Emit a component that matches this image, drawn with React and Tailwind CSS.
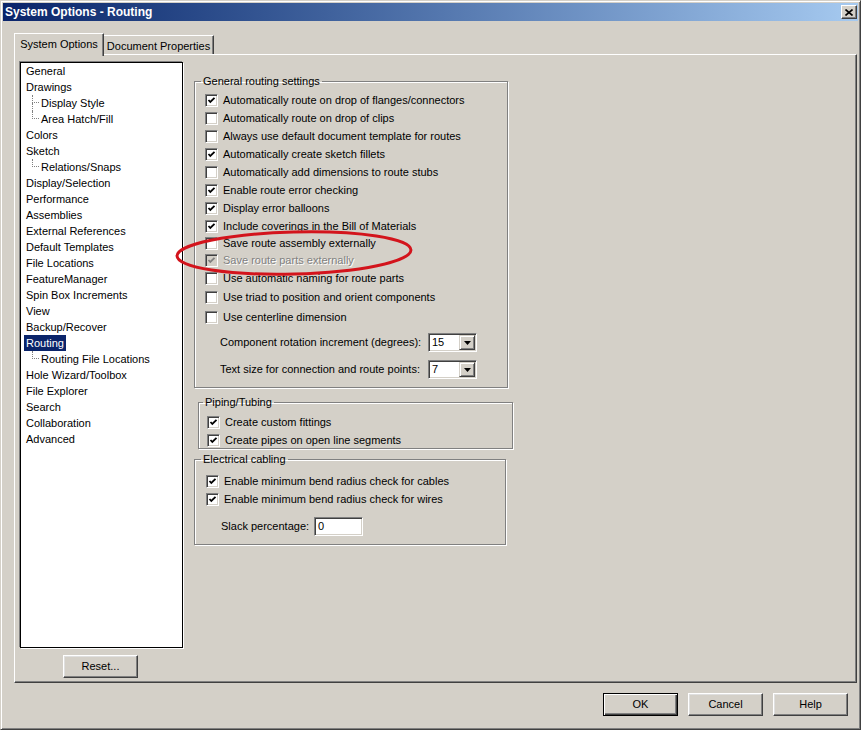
import React from 'react';

const FONT = { fontFamily: '"Liberation Sans", Arial, sans-serif' };

const tree = [
  { label: 'General' },
  { label: 'Drawings' },
  { label: 'Display Style', child: true },
  { label: 'Area Hatch/Fill', child: true, last: true },
  { label: 'Colors' },
  { label: 'Sketch' },
  { label: 'Relations/Snaps', child: true, last: true },
  { label: 'Display/Selection' },
  { label: 'Performance' },
  { label: 'Assemblies' },
  { label: 'External References' },
  { label: 'Default Templates' },
  { label: 'File Locations' },
  { label: 'FeatureManager' },
  { label: 'Spin Box Increments' },
  { label: 'View' },
  { label: 'Backup/Recover' },
  { label: 'Routing', selected: true },
  { label: 'Routing File Locations', child: true, last: true },
  { label: 'Hole Wizard/Toolbox' },
  { label: 'File Explorer' },
  { label: 'Search' },
  { label: 'Collaboration' },
  { label: 'Advanced' },
];

// mt = extra offset so rows land where the dialog has them
const generalRows = [
  { label: 'Automatically route on drop of flanges/connectors', checked: true, mt: 'mt-[3px]' },
  { label: 'Automatically route on drop of clips' },
  { label: 'Always use default document template for routes' },
  { label: 'Automatically create sketch fillets', checked: true },
  { label: 'Automatically add dimensions to route stubs' },
  { label: 'Enable route error checking', checked: true },
  { label: 'Display error balloons', checked: true },
  { label: 'Include coverings in the Bill of Materials', checked: true },
  { label: 'Save route assembly externally', mt: 'mt-[-1px]' },
  { label: 'Save route parts externally', checked: true, disabled: true, mt: 'mt-[-1px]' },
  { label: 'Use automatic naming for route parts' },
  { label: 'Use triad to position and orient components', mt: 'mt-[1px]' },
  { label: 'Use centerline dimension', mt: 'mt-[2px]' },
];

function Checkbox({ checked, disabled }) {
  return (
    <span className={`flex h-[13px] w-[13px] shrink-0 border border-t-[#808080] border-l-[#808080] border-r-white border-b-white shadow-[inset_1px_1px_0_#404040,inset_-1px_-1px_0_#d4d0c8] ${disabled ? 'bg-[#d4d0c8]' : 'bg-white'}`}>
      {checked && (
        <svg width="11" height="11" viewBox="0 0 11 11" className="block">
          <path d="M2.5 5 L4.3 7 L8.5 2.8" fill="none" stroke={disabled ? '#808080' : '#000'} strokeWidth="1.8" />
        </svg>
      )}
    </span>
  );
}

function CheckRow({ label, checked, disabled, mt = '', h = 'h-[18px]' }) {
  return (
    <div className={`flex items-center gap-[5px] ${h} ${mt}`}>
      <Checkbox checked={checked} disabled={disabled} />
      <span className={disabled ? 'text-[#808080] [text-shadow:1px_1px_0_#fff]' : 'text-black'}>{label}</span>
    </div>
  );
}

function Group({ title, className, bodyClass, legendClass = 'ml-[6px]', children }) {
  return (
    <fieldset className={`border border-[#808080] shadow-[1px_1px_0_#fff,inset_1px_1px_0_#fff] ${className}`}>
      <legend className={`${legendClass} px-[2px] leading-[13px]`}>{title}</legend>
      <div className={bodyClass}>{children}</div>
    </fieldset>
  );
}

function Combo({ value }) {
  return (
    <div className="flex h-[19px] w-[49px] border border-t-[#808080] border-l-[#808080] border-r-white border-b-white shadow-[inset_1px_1px_0_#404040,inset_-1px_-1px_0_#d4d0c8] bg-white p-[1px]">
      <span className="flex-1 pl-[2px] leading-[15px]">{value}</span>
      <span className="flex w-[16px] items-center justify-center border border-t-[#d4d0c8] border-l-[#d4d0c8] border-r-[#404040] border-b-[#404040] bg-[#d4d0c8] shadow-[inset_1px_1px_0_#fff,inset_-1px_-1px_0_#808080]">
        <svg width="7" height="4" viewBox="0 0 7 4"><path d="M0 0 H7 L3.5 4 Z" fill="#000" /></svg>
      </span>
    </div>
  );
}

function Button({ children, isDefault }) {
  return (
    <button
      className={`flex h-[23px] w-[75px] items-center justify-center bg-[#d4d0c8] ${
        isDefault
          ? 'border border-black shadow-[inset_1px_1px_0_#fff,inset_-1px_-1px_0_#404040,inset_-2px_-2px_0_#808080]'
          : 'border border-t-white border-l-white border-r-[#404040] border-b-[#404040] shadow-[inset_-1px_-1px_0_#808080,inset_1px_1px_0_#dfdfdf]'
      }`}
    >
      {children}
    </button>
  );
}

function TreeRow({ item }) {
  return (
    <div className={`flex h-[16px] items-stretch ${item.child ? 'pl-[11px]' : 'pl-[3px]'}`}>
      {item.child && (
        <span className="flex w-[7px] flex-col">
          <span className="h-[8px] border-l border-b border-dotted border-[#808080]" />
          <span className={`flex-1 ${item.last ? '' : 'border-l border-dotted border-[#808080]'}`} />
        </span>
      )}
      <span className={`px-[2px] leading-[16px] ${item.selected ? 'bg-[#0a246a] text-white' : 'text-black'}`}>
        {item.label}
      </span>
    </div>
  );
}

export default function App() {
  return (
    <div
      style={FONT}
      className="relative flex h-[730px] w-[861px] flex-col overflow-hidden border border-t-[#d4d0c8] border-l-[#d4d0c8] border-r-[#404040] border-b-[#404040] bg-[#d4d0c8] p-[2px] text-[11px] text-black shadow-[inset_1px_1px_0_#fff,inset_-1px_-1px_0_#808080]"
    >
      {/* Title bar */}
      <div className="flex h-[18px] items-center bg-gradient-to-r from-[#0a246a] to-[#a6caf0] pl-[2px] pr-[1px]">
        <span className="flex-1 text-[12px] font-bold text-white">System Options - Routing</span>
        <span className="flex h-[14px] w-[16px] items-center justify-center border border-t-white border-l-white border-r-[#404040] border-b-[#404040] bg-[#d4d0c8] shadow-[inset_-1px_-1px_0_#808080]">
          <svg width="8" height="7" viewBox="0 0 8 7">
            <path d="M0.5 0.5 L7.5 6.5 M7.5 0.5 L0.5 6.5" stroke="#000" strokeWidth="1.6" />
          </svg>
        </span>
      </div>

      {/* Tabs */}
      <div className="relative z-10 mb-[-2px] ml-[11px] mt-[12px] flex items-end">
        <div className="flex h-[23px] w-[90px] items-start justify-center border-l border-t border-r border-t-white border-l-white border-r-[#404040] bg-[#d4d0c8] pt-[2px] shadow-[inset_-1px_0_0_#808080]">
          System Options
        </div>
        <div className="mb-[2px] flex h-[19px] w-[110px] items-start justify-center border-t border-r border-t-white border-r-[#404040] pt-[2px] shadow-[inset_-1px_0_0_#808080]">
          Document Properties
        </div>
      </div>

      {/* Tab panel */}
      <div className="ml-[11px] flex h-[629px] w-[843px] border border-t-white border-l-white border-r-[#404040] border-b-[#404040] shadow-[inset_-1px_-1px_0_#808080]">
        <div className="flex flex-col pl-[5px] pt-[7px]">
          <div className="h-[586px] w-[163px] border border-black bg-white shadow-[-1px_-1px_0_#808080,1px_1px_0_#fff]">
            {tree.map((item) => (
              <TreeRow key={item.label} item={item} />
            ))}
          </div>
          <div className="ml-[43px] mt-[7px]">
            <Button>Reset...</Button>
          </div>
        </div>

        <div className="ml-[11px] flex flex-col pt-[20px]">
          <Group title="General routing settings" className="w-[314px]" bodyClass="pb-[8px] pl-[10px]">
            {generalRows.map((r) => (
              <CheckRow key={r.label} {...r} />
            ))}
            <div className="mt-[7px] flex h-[19px] items-center pl-[15px]">
              <span className="w-[208px]">Component rotation increment (degrees):</span>
              <Combo value="15" />
            </div>
            <div className="mt-[8px] flex h-[19px] items-center pl-[15px]">
              <span className="w-[208px]">Text size for connection and route points:</span>
              <Combo value="7" />
            </div>
          </Group>

          <Group title="Piping/Tubing" className="ml-[4px] mt-[8px] w-[315px]" legendClass="ml-[4px]" bodyClass="pl-[8px]">
            <CheckRow label="Create custom fittings" checked h="h-[16px]" mt="mt-[5px]" />
            <CheckRow label="Create pipes on open line segments" checked h="h-[16px]" mt="mt-[2px]" />
          </Group>

          <Group title="Electrical cabling" className="mt-[4px] w-[312px]" bodyClass="pb-[8px] pl-[11px]">
            <CheckRow label="Enable minimum bend radius check for cables" checked mt="mt-[6px]" />
            <CheckRow label="Enable minimum bend radius check for wires" checked />
            <div className="mt-[9px] flex h-[19px] items-center">
              <span className="w-[108px] pl-[15px]">Slack percentage:</span>
              <span className="h-[19px] w-[49px] border border-t-[#808080] border-l-[#808080] border-r-white border-b-white bg-white pl-[3px] leading-[17px] shadow-[inset_1px_1px_0_#404040,inset_-1px_-1px_0_#d4d0c8]">
                0
              </span>
            </div>
          </Group>
        </div>
      </div>

      {/* Dialog buttons */}
      <div className="mt-[10px] flex justify-end gap-[10px] pr-[10px]">
        <Button isDefault>OK</Button>
        <Button>Cancel</Button>
        <Button>Help</Button>
      </div>

      {/* Hand-drawn red ellipse annotation */}
      <svg className="pointer-events-none absolute left-[169px] top-[222px]" width="250" height="60" viewBox="0 0 250 60">
        <ellipse cx="124" cy="30" rx="117" ry="21" fill="none" stroke="#d3141c" strokeWidth="3" transform="rotate(-1.5 124 30)" />
      </svg>
    </div>
  );
}
